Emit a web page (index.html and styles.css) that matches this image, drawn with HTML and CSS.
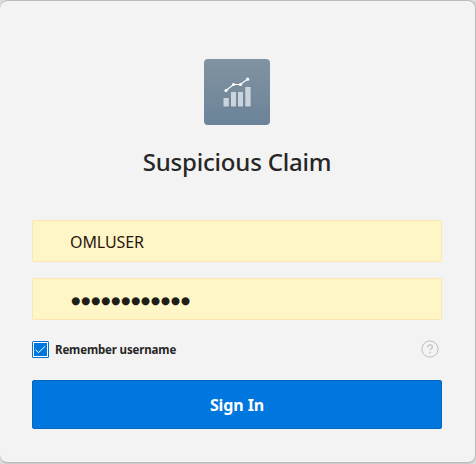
FILE: index.html
```html
<!DOCTYPE html>
<html lang="en">
<head>
<meta charset="utf-8">
<title>Suspicious Claim</title>
<link rel="stylesheet" href="styles.css">
</head>
<body>
<main class="card">
  <svg class="logo" viewBox="0 0 66 66" aria-hidden="true">
    <defs>
      <linearGradient id="tile" x1="0" y1="0" x2="0" y2="1">
        <stop offset="0" stop-color="#8193a1"/>
        <stop offset="1" stop-color="#6b8399"/>
      </linearGradient>
    </defs>
    <rect width="66" height="66" rx="4" fill="url(#tile)"/>
    <path fill="#000" fill-opacity=".08" d="M19 47.5h28v1H19z"/>
    <path fill="#cbd4dc" d="M19.5 39h5.3v8.5h-5.3zM27 33h5v14.5h-5zM34 33h5v14.5h-5zM41.3 28h5.3v19.5h-5.3z"/>
    <path fill="none" stroke="#fff" stroke-width="1.2" d="M22 31.5l7.5-6h7L43.7 20"/>
    <g fill="#fff"><circle cx="22" cy="31.5" r="1.6"/><circle cx="29.5" cy="25.5" r="1.6"/><circle cx="36.5" cy="25.5" r="1.6"/><circle cx="43.7" cy="20.2" r="1.6"/></g>
  </svg>
  <h1 class="title">Suspicious Claim</h1>
  <form class="form">
    <input class="field" type="text" value="OMLUSER" aria-label="Username">
    <div class="field field-password">●●●●●●●●●●●●</div>
    <div class="options">
      <svg class="check" viewBox="0 0 17 17" aria-hidden="true">
        <rect width="17" height="17" rx="1.5" fill="#0572ce"/>
        <rect x="1.5" y="1.5" width="14" height="14" fill="#0076df" stroke="#fff"/>
        <path d="M3.5 8.7l3 3L13.3 5" fill="none" stroke="#fff" stroke-width="1"/>
      </svg>
      <span class="remember">Remember username</span>
      <svg class="help" viewBox="0 0 18 18" aria-hidden="true">
        <circle cx="9" cy="9" r="8.1" fill="none" stroke="#bdbdbd"/>
        <path d="M6.8 7.2c0-3.3 4.8-3 4.6-.2-.1 1.7-2.3 1.6-2.3 3.5" fill="none" stroke="#bdbdbd" stroke-width="1.2"/>
        <circle cx="9.1" cy="12.6" r=".8" fill="#bdbdbd"/>
      </svg>
    </div>
    <button class="submit" type="button">Sign In</button>
  </form>
</main>
</body>
</html>
```
FILE: styles.css
```css
* { box-sizing: border-box; }
body {
  margin: 0;
  height: 464px;
  overflow: hidden;
  background: #dcdcdc;
  font-family: "Noto Sans", "Open Sans", sans-serif;
  color: #262626;
}
.card {
  width: 476px;
  height: 463px;
  padding: 58px 33px 0 32px;
  display: flex;
  flex-direction: column;
  align-items: center;
  background: #f3f3f3;
  border: 1px solid #bcbcbc;
  border-left: 0;
  border-radius: 8px;
  box-shadow: 0 1px 1px #c8c8c8;
}
.logo { width: 66px; height: 66px; }
.title {
  margin: 20px 0 0;
  height: 34px;
  font-size: 24px;
  line-height: 34px;
  font-weight: 500;
  letter-spacing: -0.2px;
  white-space: nowrap;
}
.form {
  width: 410px;
  margin-top: 41px;
  display: flex;
  flex-direction: column;
}
.field {
  width: 100%;
  height: 42px;
  margin: 0 0 16px;
  padding: 2px 37px 0;
  border: 1px solid #ffe6b0;
  border-radius: 2px;
  background: #fff6c7;
  font: 16px/38px "Noto Sans", sans-serif;
  letter-spacing: -0.1px;
  color: #2b160e;
}
.field-password {
  padding-top: 3px;
  padding-left: 38px;
  font: 10.5px/36px "DejaVu Sans", sans-serif;
  letter-spacing: 0.82px;
  color: #201c16;
}
.options {
  height: 18px;
  margin-top: 4px;
  display: flex;
  align-items: center;
}
.check { width: 17px; height: 17px; }
.remember {
  margin-left: 6px;
  padding-top: 2px;
  font-size: 11.5px;
  line-height: 16px;
  font-weight: 700;
  letter-spacing: -0.15px;
}
.help { width: 18px; height: 18px; margin-left: auto; margin-right: 3px; }
.submit {
  height: 49px;
  margin: 22px 0 0;
  padding: 1px 0 0;
  border: 1px solid #0568bd;
  border-radius: 2px;
  background: #0076df;
  color: #fff;
  font: 700 16px/20px "Noto Sans", sans-serif;
  letter-spacing: -0.1px;
}
```
